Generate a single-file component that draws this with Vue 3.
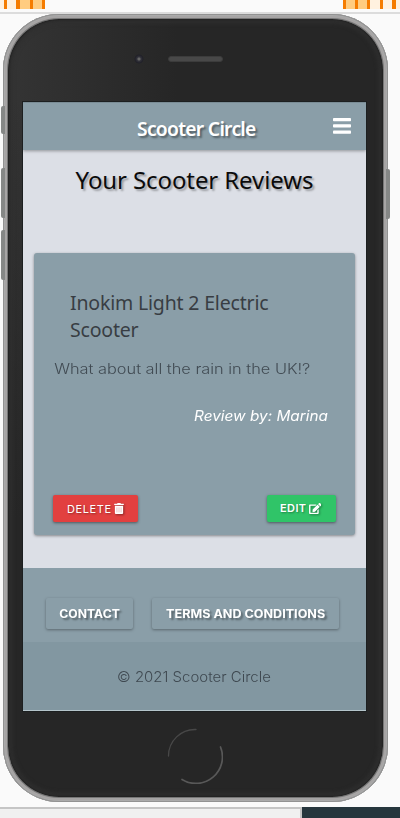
<script setup>
const leftKeys = ['mute', 'up', 'down']
const footerLinks = [
  { label: 'CONTACT', cls: 'contact' },
  { label: 'TERMS AND CONDITIONS', cls: 'terms' },
]
</script>

<template>
  <div class="page">
    <div class="ruler">
      <div class="bars bars-left"></div>
      <div class="bars bars-right"></div>
    </div>

    <div class="stage">
      <i v-for="k in leftKeys" :key="k" class="key" :class="k"></i>
      <i class="key power"></i>
      <div class="phone">
        <div class="bezel">
          <div class="top">
            <span class="camera"></span>
            <span class="speaker"></span>
          </div>

          <div class="screen">
            <header class="nav">
              <span class="brand">Scooter Circle</span>
              <svg class="menu" viewBox="0 0 18 16" width="18" height="16">
                <rect x="0" y="0" width="18" height="3.2" rx=".8" />
                <rect x="0" y="6.3" width="18" height="3.2" rx=".8" />
                <rect x="0" y="12.6" width="18" height="3.2" rx=".8" />
              </svg>
            </header>

            <main class="content">
              <h1 class="title">Your Scooter Reviews</h1>
              <article class="card">
                <h2 class="name">Inokim Light 2 Electric<br />Scooter</h2>
                <p class="text">What about all the rain in the UK!?</p>
                <p class="author">Review by: Marina</p>
                <div class="actions">
                  <button class="btn delete">
                    <span>DELETE</span>
                    <svg viewBox="0 0 448 512" width="10" height="11">
                      <path d="M432 32H312l-9-19A24 24 0 0 0 281 0H167a24 24 0 0 0-22 13l-9 19H16A16 16 0 0 0 0 48v32a16 16 0 0 0 16 16h416a16 16 0 0 0 16-16V48a16 16 0 0 0-16-16zM32 128v336a48 48 0 0 0 48 48h288a48 48 0 0 0 48-48V128z" />
                      <path class="slots" d="M128 200v240M224 200v240M320 200v240" />
                    </svg>
                  </button>
                  <button class="btn edit">
                    <span>EDIT</span>
                    <svg viewBox="0 0 576 512" width="12.500" height="11">
                      <path d="M402.600 83.200l90.200 90.200c3.800 3.800 3.800 10 0 13.800L274.400 405.600l-92.800 10.300c-12.400 1.400-22.900-9.100-21.500-21.500l10.300-92.800L388.800 83.200c3.800-3.800 10-3.800 13.800 0zm162-22.900l-48.800-48.800c-15.200-15.200-39.900-15.200-55.200 0l-35.400 35.400c-3.800 3.800-3.800 10 0 13.800l90.200 90.200c3.800 3.800 10 3.800 13.800 0l35.400-35.400c15.200-15.300 15.200-40 0-55.200zM384 346.200V448H64V128h229.800c3.200 0 6.200-1.300 8.500-3.500l40-40c7.600-7.600 2.200-20.500-8.500-20.500H48C21.500 64 0 85.500 0 112v352c0 26.500 21.500 48 48 48h352c26.500 0 48-21.500 48-48V306.200c0-10.700-12.900-16-20.500-8.500l-40 40c-2.200 2.300-3.500 5.300-3.500 8.500z" />
                    </svg>
                  </button>
                </div>
              </article>
            </main>

            <footer class="footer">
              <div class="links">
                <a v-for="l in footerLinks" :key="l.label" class="link" :class="l.cls"><span>{{ l.label }}</span></a>
              </div>
              <div class="copyright"><span>© 2021 Scooter Circle</span></div>
            </footer>
          </div>

          <div class="bottom">
            <svg class="home" viewBox="0 0 56 56" width="56" height="56" fill="none" stroke-linecap="round">
              <path d="M1.500 28A26.500 26.500 0 0 1 29 1.500" stroke="#484848" stroke-width="1.3" />
              <path d="M53.500 19A26.500 26.500 0 0 1 15 51.500" stroke="#585858" stroke-width="1.7" />
            </svg>
          </div>
        </div>
      </div>
    </div>

    <div class="below">
      <div class="panel"></div>
      <div class="dark"></div>
    </div>
  </div>
</template>

<style>
body {
  margin: 0;
  background: #fafafa;
}
</style>

<style scoped>
.page,
.page * {
  box-sizing: border-box;
}
.page {
  width: 400px;
  height: 818px;
  overflow: hidden;
  background: #fafafa;
  display: flex;
  flex-direction: column;
  font-family: Inter, "Liberation Sans", sans-serif;
}
.ruler {
  height: 14px;
  border-bottom: 2px solid #dcdcdc;
  display: flex;
  justify-content: space-between;
  align-items: flex-start;
}
.bars {
  height: 9px;
}
.bars-left {
  width: 45px;
  background: linear-gradient(90deg, #fff1df 0 4px, #f57c00 4px 7.500px, #fff1df 7.500px 16.500px, #f57c00 16.500px 20px, #ffcc80 20px 30px, #f57c00 30px 33px, #ffcc80 33px 42px, #f57c00 42px);
}
.bars-right {
  width: 57px;
  background: linear-gradient(90deg, #f57c00 0 3px, #ffcc80 3px 12px, #f57c00 12px 15px, #ffcc80 15px 24px, #f57c00 24px 27px, #fff1df 27px 37px, #f57c00 37px 40px, #fff1df 40px 49px, #f57c00 49px 53px, #fff1df 53px);
}
.stage {
  position: relative;
  height: 793px;
  padding-left: 3px;
}
.key {
  position: absolute;
  left: 1px;
  width: 4px;
  height: 50px;
  background: #858786;
  border-radius: 2px 0 0 2px;
}
.mute {
  top: 92px;
  height: 28px;
}
.up {
  top: 154px;
}
.down {
  top: 216px;
}
.power {
  left: 386px;
  top: 155px;
  border-radius: 0 2px 2px 0;
}
.phone {
  width: 385px;
  height: 788px;
  padding: 5px;
  border-radius: 56px;
  background: #a9a9a9;
  box-shadow: inset 0 0 0 1px #929292, inset 0 0 0 2px #aaa, inset 0 0 0 4px #a6a4a4, inset 0 0 0 5px #777;
}
.bezel {
  height: 778px;
  border-radius: 51px;
  padding: 0 17px 0 15px;
  background: linear-gradient(#26262600 80px, #262626 500px), linear-gradient(90deg, #343434, #262626 45%);
  box-shadow: inset 0 0 2px 1px #202020, inset 0 0 4px 4px #303030;
  display: flex;
  flex-direction: column;
}
.top {
  height: 83px;
  display: flex;
  align-items: center;
  padding: 0 0 3px 111px;
  gap: 24px;
}
.camera {
  width: 10px;
  height: 10px;
  border-radius: 50%;
  background: radial-gradient(circle, #666 0 1px, #34343c 2px, #202028 4px, #292929 5px);
}
.speaker {
  width: 55px;
  height: 6px;
  border-radius: 3px;
  background: #484848;
  border: 1px solid #3c3c3c;
}
.screen {
  width: 343px;
  height: 609px;
  background: #dcdfe6;
  overflow: hidden;
  box-shadow: 0 0 0 1px #1c1f20;
  border-bottom: 1px solid #b5c5cb;
  display: flex;
  flex-direction: column;
}
.nav {
  height: 48px;
  flex: none;
  background: #8a9ea8;
  border-top: 1px solid #7a8c95;
  box-shadow: 0 1px 3px rgba(0, 0, 0, .35);
  display: flex;
  align-items: center;
  justify-content: space-between;
  padding: 0 15px 0 114px;
}
.brand {
  font: 600 19.300px/24px "Noto Sans", sans-serif;
  letter-spacing: -.72px;
  color: #fff;
  text-shadow: 2px 2px 2px rgba(0, 0, 0, .4);
  white-space: nowrap;
  padding-top: 4px;
}
.menu {
  fill: #fff;
  margin-bottom: 1px;
}
.content {
  height: 418px;
  flex: none;
  padding: 13px 11px 0;
}
.title {
  margin: 0 0 57px;
  height: 33px;
  text-align: center;
  font: 400 24px/33px "Noto Sans", sans-serif;
  letter-spacing: -.1px;
  color: #0b0b0b;
  text-shadow: 2px 2px 2px rgba(0, 0, 0, .3);
  white-space: nowrap;
}
.card {
  height: 282px;
  border-radius: 3px;
  background: #8a9ea8;
  box-shadow: 0 1px 3px rgba(0, 0, 0, .4);
  padding: 37px 19px 13px;
  display: flex;
  flex-direction: column;
}
.name {
  margin: 0 0 16px;
  padding-left: 17px;
  font: 400 19.500px/26.500px "Noto Sans", sans-serif;
  letter-spacing: -.18px;
  color: #383d43;
  white-space: nowrap;
}
.text {
  margin: 0;
  padding-left: 1px;
  font-size: 14.200px;
  line-height: 20px;
  color: #414b53;
  font-weight: 300;
  white-space: nowrap;
  transform: scaleX(1.152);
  transform-origin: left;
}
.author {
  margin: 27px 8px 0 0;
  text-align: right;
  font-size: 14.200px;
  line-height: 20px;
  font-style: italic;
  color: #fff;
  white-space: nowrap;
  transform: scaleX(1.082);
  transform-origin: right;
}
.actions {
  margin-top: auto;
  display: flex;
  justify-content: space-between;
}
.btn {
  border: 0;
  height: 27px;
  padding: 0 0 0 14px;
  border-radius: 2px;
  display: flex;
  align-items: center;
  gap: 2px;
  color: #fff;
  font: 400 11px/16px Inter, sans-serif;
  white-space: nowrap;
  box-shadow: 0 1px 3px rgba(0, 0, 0, .45);
  text-shadow: 1px 1px 2px rgba(0, 0, 0, .35);
}
.btn svg {
  fill: #fff;
  filter: drop-shadow(1px 1px 1px rgba(0, 0, 0, .4));
}
.btn .slots {
  fill: none;
  stroke: #e2a8a6;
  stroke-width: 32;
}
.delete {
  width: 85px;
  background: #e2403f;
  letter-spacing: .6px;
}
.edit {
  width: 69px;
  background: #30c468;
  font-weight: 600;
  letter-spacing: .4px;
  padding: 0 0 1px 13px;
}
.footer {
  height: 142px;
  flex: none;
  background: #8a9ea8;
}
.links {
  height: 74px;
  padding: 30px 27px 0 23px;
  display: flex;
  justify-content: space-between;
}
.link {
  height: 31px;
  border-radius: 2px;
  display: flex;
  align-items: center;
  justify-content: center;
  font-size: 11.500px;
  font-weight: 700;
  color: #fff;
  text-shadow: 2px 2px 2px rgba(0, 0, 0, .4);
  box-shadow: 0 1px 3px rgba(0, 0, 0, .35);
  white-space: nowrap;
}
.contact {
  width: 87px;
}
.contact span {
  transform: scaleX(1.06);
}
.terms {
  width: 187px;
}
.terms span {
  transform: scaleX(1.095);
}
.copyright {
  height: 68px;
  padding-right: 1px;
  background: #8297a1;
  display: flex;
  align-items: center;
  justify-content: center;
  font-size: 14.200px;
  font-weight: 300;
  color: #3f4951;
  white-space: nowrap;
}
.copyright span {
  transform: scaleX(1.055);
}
.bottom {
  height: 86px;
  padding: 17px 0 0 144px;
}
.home {
  display: block;
}
.below {
  height: 11px;
  display: flex;
}
.panel {
  width: 302px;
  background: #f0f0f0;
  border-top: 2px solid #c5c5c5;
  border-right: 2px solid #c5c5c5;
}
.dark {
  flex: 1;
  background: #26363d;
}
</style>
